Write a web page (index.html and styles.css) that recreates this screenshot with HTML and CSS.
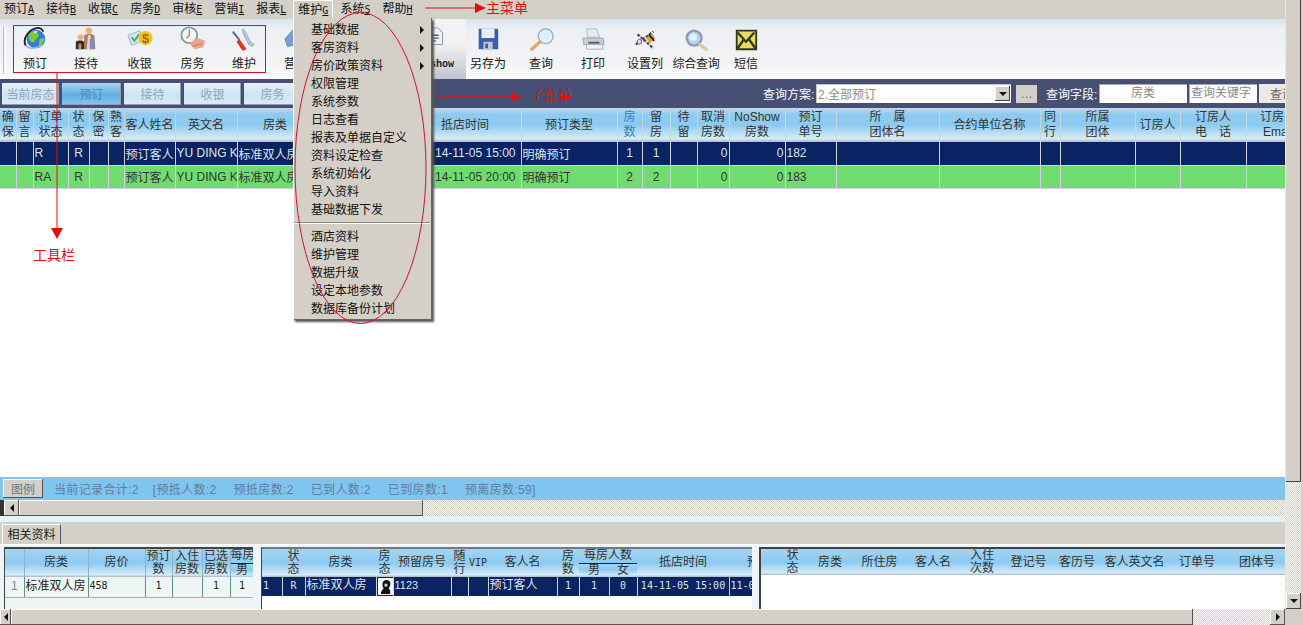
FILE: index.html
```html
<!DOCTYPE html>
<html lang="zh">
<head>
<meta charset="UTF-8" />
<meta name="viewport" content="width=device-width, initial-scale=1" />
<title>预订</title>
<link rel="stylesheet" href="styles.css">
</head>
<body>
<div class="app">
  <div class="main">
    <div class="menubar">
      <span class="menu-title">预订<u>A</u></span>
      <span class="menu-title">接待<u>B</u></span>
      <span class="menu-title">收银<u>C</u></span>
      <span class="menu-title">房务<u>D</u></span>
      <span class="menu-title">审核<u>E</u></span>
      <span class="menu-title">营销<u>I</u></span>
      <span class="menu-title">报表<u>L</u></span>
      <span class="menu-title open">维护<u>G</u></span>
      <span class="menu-title">系统<u>S</u></span>
      <span class="menu-title">帮助<u>H</u></span>
    </div>

    <div class="toolbar">
      <div class="grip"></div>
      <div class="tool w50">
        <svg viewBox="0 0 28 28"><circle cx="15" cy="14" r="10" fill="#2f7fd8"/><path d="M9 7c4-2 8-1 9 2s-3 4-4 7-4 2-6-1-1-6 1-8zM19 14l5-1c0 4-2 8-6 9z" fill="#7cc83e"/><path d="M12 6c2-1 4-1 5 0l-3 2z" fill="#e8f4ff"/><path d="M4 21C0 13 8 3 17 2c3 0 5 2 6 4" fill="none" stroke="#20242c" stroke-width="2"/><path d="M4 21c3 4 12 4 18-1" fill="none" stroke="#8fb8e0" stroke-width="1.500"/></svg>
        <span>预订</span>
      </div>
      <div class="tool w52">
        <svg viewBox="0 0 28 28"><circle cx="17" cy="5" r="3.500" fill="#e8b088"/><path d="M12 10c3-2 8-2 11 0l1 15H12z" fill="#b07a60"/><path d="M16 10h3l1 15h-5z" fill="#e8d8d0"/><path d="M18 14h4v11h-4z" fill="#7f90c8"/><circle cx="8" cy="12" r="3" fill="#e8b088"/><path d="M3 17c2-2 7-2 9 0v8H3z" fill="#3c2c20"/><path d="M6 19h3v6H6z" fill="#c09070"/></svg>
        <span>接待</span>
      </div>
      <div class="tool w55">
        <svg viewBox="0 0 28 28"><path d="M1 10l13-5 3 11-12 5z" fill="#d4e2f8" stroke="#93aedb"/><path d="M5 12l3 4 5-7" fill="none" stroke="#52b048" stroke-width="2"/><circle cx="20" cy="13" r="7.500" fill="#f3c21f"/><text x="20" y="18" class="icon-dollar">$</text></svg>
        <span>收银</span>
      </div>
      <div class="tool w51">
        <svg viewBox="0 0 28 28"><circle cx="10" cy="10" r="8.500" fill="#f4f6f6" stroke="#8a9a98" stroke-width="2"/><path d="M10 4v6l-3 3" fill="none" stroke="#c05040" stroke-width="1.200"/><path d="M10 19l9-6 8 3-2 7-9 2z" fill="#eda48c"/><path d="M13 22l11-3" stroke="#c97a60" fill="none"/></svg>
        <span>房务</span>
      </div>
      <div class="tool w52">
        <svg viewBox="0 0 28 28"><path d="M2 6l7 9" stroke="#5a6880" stroke-width="2"/><path d="M9 14l7 10c1 2-3 3-4 2L6 17z" fill="#d8381c"/><path d="M13 3l3 4 5 10 4 3-2 2-4-2-6-12-1-4z" fill="#b4c6e4" stroke="#7f90b0" stroke-width=".6"/></svg>
        <span>维护</span>
      </div>
      <div class="tool w52">
        <svg viewBox="0 0 28 28"><path d="M2 14l9-10 2 16-8 2z" fill="#7f9ed6" stroke="#5f7fb0"/><circle cx="18" cy="17" r="7" fill="#dfe8f4" stroke="#7f94b8"/></svg>
        <span>营销</span>
      </div>
      <div class="tool w50"></div>
      <div class="tool w34"></div>
      <div class="tool w60 active">
        <svg viewBox="0 0 28 28"><path d="M5 2h11l5 5v13H5z" fill="#eef3fa" stroke="#7f94b8"/><path d="M8 10h9M8 13h9M8 16h6" stroke="#4a6a58" stroke-width="1.500"/></svg>
        <span class="serif-label">Noshow</span>
      </div>
      <div class="tool w44">
        <svg viewBox="0 0 28 28"><path d="M4 3h20l1 1v21H4z" fill="#3d5da8"/><path d="M7 3h14v10H7z" fill="#e8eef8"/><path d="M9 17h10v8H9z" fill="#bcc6d8"/><path d="M11 19h3v5h-3z" fill="#3d5da8"/></svg>
        <span>另存为</span>
      </div>
      <div class="tool w62">
        <svg viewBox="0 0 28 28"><circle cx="19" cy="11" r="8" fill="#dff0fb" stroke="#8fb4dc" stroke-width="1.500"/><path d="M13 17L4 25" stroke="#e0a860" stroke-width="3.500" stroke-linecap="round"/></svg>
        <span>查询</span>
      </div>
      <div class="tool w42">
        <svg viewBox="0 0 28 28"><path d="M7 3h11l3 9H8z" fill="#dfeaf4" stroke="#a8b8c4"/><path d="M3 13h22l1 7H4z" fill="#c6ced4" stroke="#98a4b0"/><path d="M9 17h12v2H9z" fill="#555c64"/><path d="M7 20h17l1 5H7z" fill="#f2f4f6" stroke="#a8b0b8"/></svg>
        <span>打印</span>
      </div>
      <div class="tool w62">
        <svg viewBox="0 0 28 28"><path d="M4 20L23 6M6 9l17 15" stroke="#45505c" stroke-width="2.500" stroke-dasharray="3 1.500"/><path d="M15 13l7-4 3 4-6 6z" fill="#e8a030"/><path d="M18 9l6 7" stroke="#222" stroke-width="2"/><circle cx="8" cy="17" r="2.500" fill="#dfe6f0" stroke="#556"/></svg>
        <span>设置列</span>
      </div>
      <div class="tool w40">
        <svg viewBox="0 0 28 28"><circle cx="12" cy="13" r="8" fill="#b8d2ec" stroke="#8a9cba" stroke-width="2.500"/><circle cx="11" cy="12" r="4" fill="#e4f0fa"/><path d="M18 20l7 5" stroke="#d8ccA0" stroke-width="3.500" stroke-linecap="round"/></svg>
        <span class="tight">综合查询</span>
      </div>
      <div class="tool w60">
        <svg viewBox="0 0 28 28"><path d="M4 5h21v20H4z" fill="#e8dc60" stroke="#2c3818" stroke-width="2"/><path d="M5 7l9 10 9-10M5 24l7-10M24 24l-7-10" fill="none" stroke="#343c20" stroke-width="2.500"/></svg>
        <span>短信</span>
      </div>
    </div>

    <div class="subbar">
      <button class="sub-tab">当前房态</button>
      <button class="sub-tab current">预订</button>
      <button class="sub-tab">接待</button>
      <button class="sub-tab">收银</button>
      <button class="sub-tab">房务</button>
      <div class="query">
        <label>查询方案:</label>
        <div class="combo"><span>2.全部预订</span><i class="combo-btn"></i></div>
        <button class="dots">…</button>
        <label>查询字段:</label>
        <div class="input field">房类</div>
        <div class="input keyword">查询关键字</div>
        <button class="search-btn">查询</button>
      </div>
    </div>

    <div class="grid-area">
      <table class="grid">
        <colgroup>
          <col width="16"><col width="17"><col width="35"><col width="21"><col width="19"><col width="16"><col width="51"><col width="62"><col width="76"><col width="96"><col width="112"><col width="96"><col width="25"><col width="28"><col width="27"><col width="32"><col width="56"><col width="51"><col width="103"><col width="101"><col width="20"><col width="75"><col width="45"><col width="66"><col width="64">
        </colgroup>
        <thead>
          <tr>
            <th>确<br>保</th><th>留<br>言</th><th>订单<br>状态</th><th>状<br>态</th><th>保<br>密</th><th>熟<br>客</th>
            <th>客人姓名</th><th>英文名</th><th>房类</th><th></th><th>抵店时间</th><th>预订类型</th>
            <th class="accent">房<br>数</th><th>留<br>房</th><th>待<br>留</th><th>取消<br>房数</th><th>NoShow<br>房数</th><th>预订<br>单号</th>
            <th>所　属<br>团体名</th><th>合约单位名称</th><th>同<br>行</th><th>所属<br>团体</th><th>订房人</th><th>订房人<br>电　话</th><th>订房人<br>Email</th>
          </tr>
        </thead>
        <tbody>
          <tr class="row-navy">
            <td></td><td></td><td>R</td><td class="c">R</td><td></td><td></td>
            <td>预订客人</td><td>YU DING K</td><td>标准双人房</td><td></td><td class="date">14-11-05 15:00</td><td>明确预订</td>
            <td class="c">1</td><td class="c">1</td><td></td><td class="r">0</td><td class="r">0</td><td>182</td>
            <td></td><td></td><td></td><td></td><td></td><td></td><td></td>
          </tr>
          <tr class="row-green">
            <td></td><td></td><td>RA</td><td class="c">R</td><td></td><td></td>
            <td>预订客人</td><td>YU DING K</td><td>标准双人房</td><td></td><td class="date">14-11-05 20:00</td><td>明确预订</td>
            <td class="c">2</td><td class="c">2</td><td></td><td class="r">0</td><td class="r">0</td><td>183</td>
            <td></td><td></td><td></td><td></td><td></td><td></td><td></td>
          </tr>
        </tbody>
      </table>
    </div>

    <div class="statusbar">
      <button class="legend">图例</button>
      <span class="total">当前记录合计:2</span>
      <span>[预抵人数:2</span>
      <span>预抵房数:2</span>
      <span>已到人数:2</span>
      <span>已到房数:1</span>
      <span>预离房数:59]</span>
    </div>

    <div class="hscroll upper">
      <div class="sb-tip"></div>
      <div class="sb-btn"><i class="arrow-left"></i></div>
      <div class="sb-thumb upper-thumb"></div>
      <div class="sb-track"></div>
    </div>
    <div class="pale-gap"></div>

    <div class="tabstrip"><div class="tab">相关资料</div></div>

    <div class="panels">
      <div class="panel panel-a">
        <table class="mini">
          <colgroup><col width="19"><col width="64"><col width="57"><col width="27"><col width="30"><col width="28"><col width="24"></colgroup>
          <thead>
            <tr><th rowspan="2"></th><th rowspan="2">房类</th><th rowspan="2">房价</th><th rowspan="2">预订<br>数</th><th rowspan="2">入住<br>房数</th><th rowspan="2">已选<br>房数</th><th class="split">每房</th></tr>
            <tr><th>男</th></tr>
          </thead>
          <tbody>
            <tr class="row-pale"><td class="c idx">1</td><td>标准双人房</td><td class="num">458</td><td class="c num">1</td><td></td><td class="c num">1</td><td class="c num">1</td></tr>
          </tbody>
        </table>
      </div>
      <div class="panel panel-b">
        <table class="mini">
          <colgroup><col width="20"><col width="23"><col width="71"><col width="17"><col width="58"><col width="17"><col width="20"><col width="69"><col width="22"><col width="30"><col width="28"><col width="92"><col width="60"></colgroup>
          <thead>
            <tr><th rowspan="2"></th><th rowspan="2">状<br>态</th><th rowspan="2">房类</th><th rowspan="2">房<br>态</th><th rowspan="2">预留房号</th><th rowspan="2">随<br>行</th><th rowspan="2" class="num">VIP</th><th rowspan="2">客人名</th><th rowspan="2">房<br>数</th><th colspan="2" class="split">每房人数</th><th rowspan="2">抵店时间</th><th rowspan="2">预订</th></tr>
            <tr><th>男</th><th>女</th></tr>
          </thead>
          <tbody>
            <tr class="row-navy short">
              <td class="num">1</td><td class="c num">R</td><td>标准双人房</td>
              <td class="face"><svg viewBox="0 0 16 18"><path d="M0 0h16v18H0z" fill="#fff"/><path d="M3 17c0-3 2-5 3-6-2-3-2-9 3-9s5 5 3 8c-1 1 0 2 1 3v4z" fill="#111"/><path d="M7 6h3v3H7z" fill="#ddd"/></svg></td>
              <td class="sans">1123</td><td></td><td></td><td>预订客人</td><td class="c num">1</td><td class="c num">1</td><td class="c num">0</td><td class="c num">14-11-05 15:00</td><td class="num">11-05</td>
            </tr>
          </tbody>
        </table>
      </div>
      <div class="panel panel-c">
        <table class="mini">
          <colgroup><col width="16"><col width="31"><col width="44"><col width="55"><col width="52"><col width="46"><col width="47"><col width="50"><col width="65"><col width="60"><col width="60"></colgroup>
          <thead>
            <tr><th></th><th>状<br>态</th><th>房类</th><th>所住房</th><th>客人名</th><th>入住<br>次数</th><th>登记号</th><th>客历号</th><th>客人英文名</th><th>订单号</th><th>团体号</th></tr>
          </thead>
        </table>
      </div>
    </div>

    <div class="hscroll lower">
      <div class="sb-btn narrow"><i class="arrow-left"></i></div>
      <div class="sb-thumb lower-thumb"></div>
      <div class="sb-track"></div>
      <div class="sb-btn"><i class="arrow-right"></i></div>
    </div>
  </div>

  <div class="vscroll">
    <div class="vbar">
      <div class="v-thumb"></div>
      <div class="v-track"></div>
      <div class="v-btn"><i class="arrow-down"></i></div>
    </div>
    <div class="corner"></div>
  </div>

  <div class="dropdown">
    <div class="drop-item sub">基础数据</div>
    <div class="drop-item sub">客房资料</div>
    <div class="drop-item sub">房价政策资料</div>
    <div class="drop-item">权限管理</div>
    <div class="drop-item">系统参数</div>
    <div class="drop-item">日志查看</div>
    <div class="drop-item">报表及单据自定义</div>
    <div class="drop-item">资料设定检查</div>
    <div class="drop-item">系统初始化</div>
    <div class="drop-item">导入资料</div>
    <div class="drop-item">基础数据下发</div>
    <div class="drop-sep"></div>
    <div class="drop-item">酒店资料</div>
    <div class="drop-item">维护管理</div>
    <div class="drop-item">数据升级</div>
    <div class="drop-item">设定本地参数</div>
    <div class="drop-item">数据库备份计划</div>
  </div>

  <svg class="marks" viewBox="0 0 1303 625">
    <rect x="13.500" y="25.500" width="252" height="47" fill="none" stroke="#d8102c"/>
    <path d="M57 73V230" stroke="#e01010" fill="none"/>
    <path d="M51 228h12l-6 11z" fill="#e01010"/>
    <path d="M425 8H476" stroke="#e01010" fill="none"/>
    <path d="M475 3l11 5-11 5z" fill="#e01010"/>
    <path d="M438 97H512" stroke="#e01010" stroke-width="1.500" fill="none"/>
    <path d="M511 92.500l10 4.500-10 4.500z" fill="#e01010"/>
    <ellipse cx="360.500" cy="168" rx="65.500" ry="155.500" fill="none" stroke="#d8102c"/>
  </svg>
  <span class="note note-main">主菜单</span>
  <span class="note note-sub">子菜单</span>
  <span class="note note-tool">工具栏</span>
</div>
</body>
</html>
```

FILE: styles.css
```css
* {
  box-sizing: border-box;
}
body {
  margin: 0;
  background-color: #d4d0c8;
  font-family: "Liberation Sans", "Noto Sans CJK SC", sans-serif;
  font-size: 12px;
  color: #222;
  overflow: hidden;
}
button {
  font: inherit;
  margin: 0;
  padding: 0;
  border: none;
}

.app {
  position: relative;
  width: 1303px;
  height: 625px;
  display: flex;
  overflow: hidden;
}
.main {
  width: 1285px;
  display: flex;
  flex-direction: column;
}

/* main menu */
.menubar {
  height: 19px;
  flex: none;
  display: flex;
  gap: 12px;
  padding-left: 4px;
  align-items: center;
  background-color: #d4d0c8;
  color: #111;
}
.menu-title {
  white-space: nowrap;
  line-height: 17px;
}
.menu-title u {
  font-family: "DejaVu Sans Mono", monospace;
  font-size: 10px;
}
.menu-title.open {
  align-self: flex-start;
  height: 19px;
  margin: 0 -5px;
  padding: 1px 4px 0;
  border: 1px solid #fff;
  border-bottom: none;
}

/* toolbar */
.toolbar {
  height: 60px;
  flex: none;
  display: flex;
  padding-left: 3px;
  background: linear-gradient(#dde4ee 0, #eef0f4 18%, #f3f3f5 70%, #fafbfb 100%);
}
.grip {
  width: 3px;
  margin: 8px 4px 5px 0;
  border-left: 1px solid #bbb;
  border-right: 1px solid #fff;
}
.tool {
  display: flex;
  flex-direction: column;
  align-items: center;
  padding-top: 7px;
  flex: none;
  white-space: nowrap;
  color: #1a1a1a;
}
.tool svg {
  width: 26px;
  height: 26px;
  display: block;
  filter: blur(0.3px);
}
.tool span {
  margin-top: 4px;
  line-height: 17px;
}
.icon-dollar {
  font-family: "Liberation Sans", sans-serif;
  font-size: 14px;
  font-weight: bold;
  text-anchor: middle;
  fill: #a06a10;
}
.tool .tight {
  letter-spacing: -0.2px;
}
.tool .serif-label {
  font-family: "Liberation Mono", monospace;
  font-size: 10px;
  font-weight: bold;
}
.tool.active {
  background: linear-gradient(#f3f3f5 40%, #bfc2d0 100%);
}
.w34 { width: 34px; }
.w40 { width: 40px; }
.w42 { width: 42px; }
.w44 { width: 44px; }
.w50 { width: 50px; }
.w51 { width: 51px; }
.w52 { width: 52px; }
.w55 { width: 55px; }
.w60 { width: 60px; }
.w62 { width: 62px; }

/* sub menu */
.subbar {
  height: 29px;
  flex: none;
  display: flex;
  align-items: center;
  gap: 3px;
  padding-left: 2px;
  background-color: #474f74;
  overflow: hidden;
}
.sub-tab {
  width: 57px;
  height: 22px;
  background: linear-gradient(#e6f1f9, #cfe4f3 50%, #dcebf6);
  color: #8ea6b8;
  box-shadow: inset -1px -1px 0 #8da0b4;
  font-size: 12px;
}
.sub-tab.current {
  width: 59px;
  background: linear-gradient(#a9d5f0, #5fafe4 55%, #8cc6ec);
  color: #4d8cb6;
}
.query {
  margin-left: auto;
  display: flex;
  align-items: center;
  color: #fff;
  height: 22px;
}
.query label {
  width: 53px;
  flex: none;
  white-space: nowrap;
}
.combo {
  width: 195px;
  height: 19px;
  display: flex;
  align-items: center;
  justify-content: space-between;
  padding: 0 1px 0 2px;
  background-color: #fff;
  color: #8a8a8a;
  box-shadow: inset 1px 1px 0 #c4c4c4;
}
.combo-btn {
  width: 15px;
  height: 15px;
  background: #d4d0c8;
  box-shadow: inset -1px -1px 0 #444, inset 1px 1px 0 #fff;
  display: flex;
  align-items: center;
  justify-content: center;
}
.combo-btn::after {
  content: "";
  border: 4px solid transparent;
  border-top: 4px solid #111;
  border-bottom: none;
}
.dots {
  width: 21px;
  height: 18px;
  margin: 0 9px 0 5px;
  background-color: #d4d0c8;
  color: #666;
}
.input {
  height: 19px;
  background-color: #fff;
  color: #8a8a8a;
  line-height: 19px;
  white-space: nowrap;
  overflow: hidden;
  box-shadow: inset 1px 1px 0 #aaa;
}
.field {
  width: 88px;
  margin-right: 2px;
  text-align: center;
}
.keyword {
  width: 68px;
  margin-right: 2px;
  padding-left: 2px;
}
.search-btn {
  width: 26px;
  height: 19px;
  overflow: hidden;
  white-space: nowrap;
  text-align: left;
  padding-left: 11px;
  background-color: #ece9e4;
  color: #666;
}

/* main grid */
.grid-area {
  flex: 1;
  background-color: #fff;
  overflow: hidden;
}
.grid {
  width: 1310px;
  table-layout: fixed;
  border-collapse: collapse;
}
.grid th {
  height: 34px;
  padding: 0;
  font-weight: normal;
  line-height: 15px;
  color: #333;
  white-space: nowrap;
  overflow: hidden;
  text-align: center;
  background: linear-gradient(#c6d8e8 0, #8fcbf0 18%, #8ccaf0 50%, #d6ebf8 90%, #aeb8c8 100%);
  border-right: 1px solid #c2d6e4;
}
.grid .accent {
  color: #2a86c6;
}
.grid td {
  height: 23px;
  padding: 0 1px;
  white-space: nowrap;
  overflow: hidden;
  border-right: 1px solid #c9d3dd;
  border-bottom: 1px solid #c9d3dd;
}
.c {
  text-align: center;
}
.r {
  text-align: right;
}
.grid td.date {
  text-align: right;
  padding-right: 5px;
}
.row-navy td {
  background-color: #0a2463;
  color: #dde4ee;
}
.row-green td {
  background-color: #70dc70;
  color: #333;
}

/* summary bar */
.statusbar {
  height: 23px;
  flex: none;
  display: flex;
  align-items: center;
  gap: 17px;
  padding-left: 3px;
  background-color: #80c5f0;
  color: #5f7f9c;
  white-space: nowrap;
  letter-spacing: 0.35px;
}
.legend {
  width: 40px;
  height: 19px;
  margin-right: -6px;
  background-color: #d4d0c8;
  color: #6a7680;
  box-shadow: inset -1px -1px 0 #555, inset 1px 1px 0 #fff;
}
.total {
  margin-right: -3px;
}

/* scrollbars */
.hscroll {
  height: 16px;
  flex: none;
  display: flex;
}
.sb-tip {
  width: 4px;
  background-color: #333;
}
.sb-btn {
  width: 15px;
  flex: none;
  display: flex;
  align-items: center;
  justify-content: center;
  background-color: #d4d0c8;
  box-shadow: inset -1px -1px 0 #555, inset 1px 1px 0 #fff;
}
.sb-btn.narrow {
  width: 11px;
}
.sb-thumb {
  flex: none;
  background-color: #d4d0c8;
  box-shadow: inset -1px -1px 0 #555, inset 1px 1px 0 #fff;
}
.upper-thumb {
  width: 404px;
}
.lower-thumb {
  width: 1182px;
}
.sb-track {
  flex: 1;
  background: repeating-conic-gradient(#d4d0c8 0 25%, #fff 0 50%) 0 0 / 2px 2px;
}
.arrow-left {
  border: 4px solid transparent;
  border-right: 4px solid #111;
  border-left: none;
}
.arrow-right {
  border: 4px solid transparent;
  border-left: 4px solid #111;
  border-right: none;
}
.arrow-down {
  border: 4px solid transparent;
  border-top: 4px solid #111;
  border-bottom: none;
}
.pale-gap {
  height: 6px;
  flex: none;
  background-color: #e6f2f8;
}

/* related info */
.tabstrip {
  height: 23px;
  flex: none;
  padding: 2px 0 0 2px;
  background-color: #d4d0c8;
  border-bottom: 1px solid #fff;
}
.tab {
  width: 59px;
  height: 20px;
  line-height: 20px;
  text-align: center;
  border-left: 1px solid #fff;
  border-top: 1px solid #fff;
  border-right: 1px solid #555;
  color: #222;
}
.panels {
  height: 64px;
  flex: none;
  display: flex;
  gap: 8px;
  padding: 2px 0 0 4px;
  background-color: #eef5f8;
}
.panel {
  overflow: hidden;
  border-top: 2px solid #444;
  border-left: 1px solid #444;
  background-color: #fff;
}
.panel-a {
  width: 249px;
  background-color: #eef6f4;
}
.panel-b {
  width: 491px;
  border-top-color: #6a7a88;
}
.panel-c {
  width: 526px;
  margin-left: -1px;
  border-left-width: 2px;
}
.mini {
  table-layout: fixed;
  width: 100%;
  border-collapse: collapse;
}
.panel-b .mini {
  width: 527px;
}
.mini th {
  height: 13px;
  padding: 0;
  font-weight: normal;
  line-height: 13px;
  white-space: nowrap;
  overflow: hidden;
  text-align: center;
  color: #333;
  background: linear-gradient(#a4d4f2, #8ccaf0 50%, #d6ebf8 92%, #aab6c4);
}
.panel-a .mini th {
  border-right: 1px solid #8fb0c6;
}
.mini thead tr:first-child th:not([rowspan]) {
  height: 14px;
}
.panel-c .mini th {
  height: 27px;
}
.mini th.split {
  border-bottom: 1px solid #222;
  background: linear-gradient(#a4d4f2, #8ccaf0);
}
.mini th.num {
  font-family: "DejaVu Sans Mono", monospace;
  font-size: 10px;
}
.mini td {
  height: 19px;
  line-height: 17px;
  padding: 0 1px;
  vertical-align: top;
  white-space: nowrap;
  overflow: hidden;
  border-right: 1px solid #c9d3dd;
}
.row-pale td {
  height: 21px;
  line-height: 18px;
  background-color: #eef6f4;
  border-right: 1px solid #5f8f8f;
  border-bottom: 1px solid #8fb8b8;
  color: #222;
}
.mini td.num {
  font-family: "DejaVu Sans Mono", monospace;
  font-size: 10px;
}
.mini td.idx {
  color: #888;
}
.mini td.sans {
  font-size: 11px;
}
.mini td.face {
  padding: 1px;
}
.face svg {
  width: 15px;
  height: 17px;
  display: block;
}

/* right scrollbar */
.vscroll {
  width: 18px;
  flex: none;
  display: flex;
  flex-direction: column;
  background-color: #d4d0c8;
}
.vbar {
  width: 16px;
  height: 609px;
  display: flex;
  flex-direction: column;
  border-left: 1px solid #e8e8e4;
}
.v-thumb {
  height: 482px;
  flex: none;
  background-color: #d4d0c8;
  box-shadow: inset -1px -1px 0 #444;
}
.v-track {
  flex: 1;
  background: repeating-conic-gradient(#d4d0c8 0 25%, #fff 0 50%) 0 0 / 2px 2px;
}
.v-btn {
  height: 16px;
  flex: none;
  display: flex;
  align-items: center;
  justify-content: center;
  background-color: #d4d0c8;
  box-shadow: inset -1px -1px 0 #444, inset 1px 1px 0 #fff;
}
.corner {
  flex: 1;
}

/* open menu, floats over the page */
.dropdown {
  position: absolute;
  left: 293px;
  top: 18px;
  width: 139px;
  padding: 2px 0 3px;
  background-color: #d4d0c8;
  color: #111;
  border-left: 1px solid #fff;
  box-shadow: 2px 2px 2px #555, inset -1px -1px 0 #666;
}
.drop-item {
  height: 18px;
  line-height: 18px;
  padding: 2px 8px 0 17px;
  display: flex;
  justify-content: space-between;
  align-items: center;
  white-space: nowrap;
}
.drop-item.sub::after {
  content: "";
  border: 4px solid transparent;
  border-left: 4px solid #111;
  border-right: none;
}
.drop-sep {
  height: 2px;
  margin: 4px 2px 3px 1px;
  border-top: 1px solid #8a8a84;
  border-bottom: 1px solid #fff;
}

/* red notes drawn on the screenshot */
.marks {
  position: absolute;
  left: 0;
  top: 0;
  width: 1303px;
  height: 625px;
  pointer-events: none;
}
.note {
  position: absolute;
  color: #e01010;
  font-size: 14px;
  line-height: 16px;
  white-space: nowrap;
}
.note-main {
  left: 486px;
  top: 0;
}
.note-sub {
  left: 530px;
  top: 87px;
}
.note-tool {
  left: 33px;
  top: 247px;
}
```
